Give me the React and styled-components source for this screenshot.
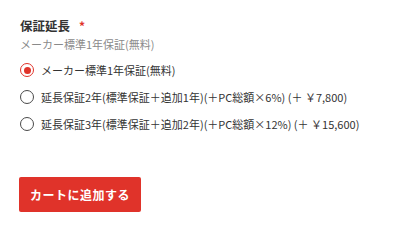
import React, { useState } from 'react'
import styled, { createGlobalStyle } from 'styled-components'

const GlobalStyle = createGlobalStyle`
  body {
    margin: 0;
    background: #ffffff;
    font-family: "Noto Sans CJK JP", "Noto Sans", sans-serif;
    color: #333333;
  }
`

const Container = styled.div`
  padding: 17px 20px 0 20px;
  display: flex;
  flex-direction: column;
  align-items: flex-start;
`

const Title = styled.div`
  font-size: 12.5px;
  font-weight: 700;
  color: #333333;
  line-height: 18px;
  display: flex;
  align-items: center;
  gap: 9px;
`

const Required = styled.span`
  color: #e0332a;
  font-size: 12px;
`

const Note = styled.div`
  margin-top: 1px;
  font-size: 11px;
  color: #8a8a8a;
  line-height: 16px;
`

const OptionList = styled.div`
  margin-top: 9px;
  display: flex;
  flex-direction: column;
  gap: 9px;
`

const Option = styled.label`
  display: flex;
  align-items: center;
  gap: 7px;
  font-size: 11px;
  color: #333333;
  line-height: 18px;
  cursor: pointer;
`

const Circle = styled.span`
  width: 14px;
  height: 14px;
  box-sizing: border-box;
  border-radius: 50%;
  border: 1.5px solid ${p => (p.$checked ? '#e0332a' : '#4a4a4a')};
  display: flex;
  align-items: center;
  justify-content: center;
  flex-shrink: 0;
  &::after {
    content: '';
    width: 7px;
    height: 7px;
    border-radius: 50%;
    background: ${p => (p.$checked ? '#e0332a' : 'transparent')};
  }
`

const AddButton = styled.button`
  margin-top: 44px;
  margin-left: -1px;
  width: 122px;
  height: 35px;
  border: none;
  border-radius: 2px;
  background: #e0332a;
  color: #ffffff;
  font-family: "Noto Sans CJK JP", "Noto Sans", sans-serif;
  font-size: 12px;
  font-weight: 700;
  letter-spacing: 0.5px;
  cursor: pointer;
`

const options = [
  'メーカー標準1年保証(無料)',
  '延長保証2年(標準保証＋追加1年)(＋PC総額×6%) (＋ ￥7,800)',
  '延長保証3年(標準保証＋追加2年)(＋PC総額×12%) (＋ ￥15,600)',
]

export default function App() {
  const [selected, setSelected] = useState(0)
  return (
    <Container>
      <GlobalStyle />
      <Title>
        保証延長<Required>*</Required>
      </Title>
      <Note>メーカー標準1年保証(無料)</Note>
      <OptionList>
        {options.map((text, i) => (
          <Option key={i} onClick={() => setSelected(i)}>
            <Circle $checked={selected === i} />
            {text}
          </Option>
        ))}
      </OptionList>
      <AddButton>カートに追加する</AddButton>
    </Container>
  )
}
